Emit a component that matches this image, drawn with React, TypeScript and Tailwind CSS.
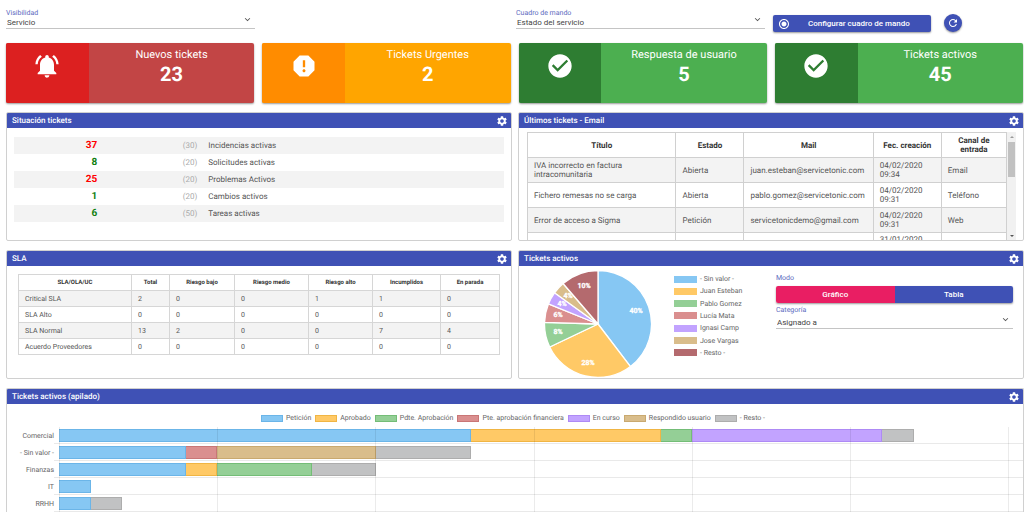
import React from 'react';
import {
  MdCheckCircle,
  MdExpandMore,
  MdNotificationsActive,
  MdRadioButtonChecked,
  MdRefresh,
  MdReport,
  MdSettings,
} from 'react-icons/md';
import type { IconType } from 'react-icons';

type SelectProps = { id: string; label: string; value: string; className?: string };

function SelectField({ id, label, value, className = '' }: SelectProps) {
  return (
    <div className={`flex flex-col ${className}`}>
      <label htmlFor={id} className="text-[7px] leading-2 text-[#5c6bc0]">
        {label}
      </label>
      <div className="grid items-start border-b border-[#c4c4c4]">
        <select
          id={id}
          className="col-start-1 row-start-1 h-[11px] w-full appearance-none bg-transparent px-px pt-px text-[8px] leading-[10px] text-[#444] outline-none"
        >
          <option>{value}</option>
        </select>
        <MdExpandMore size={11} className="pointer-events-none col-start-1 row-start-1 -mt-[3px] mr-[2px] justify-self-end text-[#555]" />
      </div>
    </div>
  );
}

type Card = { title: string; value: number; Icon: IconType; dark: string; light: string };

const cards: Card[] = [
  { title: 'Nuevos tickets', value: 23, Icon: MdNotificationsActive, dark: 'bg-[#dc2020]', light: 'bg-[#c24545]' },
  { title: 'Tickets Urgentes', value: 2, Icon: MdReport, dark: 'bg-[#ff8c00]', light: 'bg-[#ffa500]' },
  { title: 'Respuesta de usuario', value: 5, Icon: MdCheckCircle, dark: 'bg-[#2e7d32]', light: 'bg-[#4caf50]' },
  { title: 'Tickets activos', value: 45, Icon: MdCheckCircle, dark: 'bg-[#2e7d32]', light: 'bg-[#4caf50]' },
];

function StatCard({ title, value, Icon, dark, light }: Card) {
  return (
    <article className={`grid h-[60px] grid-cols-3 overflow-hidden rounded-xs text-white shadow-[0_1px_2px_rgba(0,0,0,0.4)] ${light}`}>
      <div className={`flex justify-center pt-[9px] ${dark}`}>
        <Icon size={28} />
      </div>
      <div className="col-span-2 flex flex-col items-center pt-[5px]">
        <h2 className="text-[11px] leading-[14px]">{title}</h2>
        <p className="text-[20px] leading-6 font-bold">{value}</p>
      </div>
    </article>
  );
}

type PanelProps = { title: string; className?: string; children: React.ReactNode };

function Panel({ title, className = '', children }: PanelProps) {
  return (
    <section className={`flex min-w-0 flex-col overflow-hidden rounded-xs border border-[#d0d0d0] ${className}`}>
      <header className="-mx-px flex h-[15px] shrink-0 items-center justify-between bg-[#3f51b5] pr-1 pl-[6px] text-white">
        <h2 className="text-[8px] leading-[10px] font-medium">{title}</h2>
        <button type="button" aria-label="Ajustes">
          <MdSettings size={12} />
        </button>
      </header>
      {children}
    </section>
  );
}

const situation = [
  { count: 37, over: true, limit: 30, name: 'Incidencias activas' },
  { count: 8, over: false, limit: 20, name: 'Solicitudes activas' },
  { count: 25, over: true, limit: 20, name: 'Problemas Activos' },
  { count: 1, over: false, limit: 20, name: 'Cambios activos' },
  { count: 6, over: false, limit: 50, name: 'Tareas activas' },
];

function SituationTable() {
  return (
    <div className="mx-[7px] mt-[9px]">
      <table className="w-full table-fixed">
        <colgroup>
          <col className="w-[17%]" />
          <col className="w-[100px]" />
          <col />
        </colgroup>
        <tbody>
          {situation.map((s) => (
            <tr key={s.name} className="h-[17px] odd:bg-[#f3f3f3]">
              <td className={`p-0 text-right text-[10px] leading-3 font-bold ${s.over ? 'text-[#ff0000]' : 'text-[#118011]'}`}>
                {s.count}
              </td>
              <td className="p-0 text-right text-[8px] leading-3 text-[#aaa]">({s.limit})</td>
              <td className="p-0 pl-[11px] text-[8px] leading-3 text-[#555]">{s.name}</td>
            </tr>
          ))}
        </tbody>
      </table>
    </div>
  );
}

const emails = [
  ['IVA incorrecto en factura intracomunitaria', 'Abierta', 'juan.esteban@servicetonic.com', '04/02/2020 09:34', 'Email'],
  ['Fichero remesas no se carga', 'Abierta', 'pablo.gomez@servicetonic.com', '04/02/2020 09:31', 'Teléfono'],
  ['Error de acceso a Sigma', 'Petición', 'servicetonicdemo@gmail.com', '04/02/2020 09:31', 'Web'],
];

function EmailTable() {
  const cell = 'border border-[#d0d0d0] py-0 pl-[6px]';
  return (
    <div className="mr-[7px] ml-2 flex min-h-0 flex-1 overflow-hidden pt-1">
      <div className="min-w-0 flex-1">
        <table className="w-full table-fixed border-collapse text-[8px] leading-[9px] text-[#555]">
          <colgroup>
            <col className="w-[31%]" />
            <col className="w-[68px]" />
            <col className="w-[27%]" />
            <col className="w-[68px]" />
            <col />
          </colgroup>
          <thead>
            <tr className="h-[25px] text-[#333]">
              {['Título', 'Estado', 'Mail', 'Fec. creación', 'Canal de entrada'].map((h) => (
                <th key={h} className="border border-[#d0d0d0] px-2 py-0 font-bold">
                  {h}
                </th>
              ))}
            </tr>
          </thead>
          <tbody>
            {emails.map((row, i) => (
              <tr key={i} className="h-[25px] odd:bg-[#f3f3f3]">
                {row.map((text, j) => (
                  <td key={j} className={`${cell} ${j === 0 ? 'pr-8' : j === 3 ? 'pr-4' : ''}`}>
                    {text}
                  </td>
                ))}
              </tr>
            ))}
            <tr className="h-[25px] align-top">
              <td className={cell} />
              <td className={cell} />
              <td className={cell} />
              <td className="border border-[#d0d0d0] pt-[2px] pb-0 pl-[6px]">31/01/2020</td>
              <td className={cell} />
            </tr>
          </tbody>
        </table>
      </div>
      <div className="flex w-[9px] flex-col items-center bg-[#f1f1f1] pt-1 pb-[3px]">
        <svg viewBox="0 0 4 2" className="h-[2px] w-1 shrink-0 fill-[#999]">
          <path d="M0 2L2 0L4 2Z" />
        </svg>
        <div className="mt-1 h-[35px] w-[7px] bg-[#c1c1c1]" />
        <svg viewBox="0 0 4 2" className="mt-auto h-[2px] w-1 shrink-0 fill-[#555]">
          <path d="M0 0L2 2L4 0Z" />
        </svg>
      </div>
    </div>
  );
}

const slaHead = ['SLA/OLA/UC', 'Total', 'Riesgo bajo', 'Riesgo medio', 'Riesgo alto', 'Incumplidos', 'En parada'];
const slaRows = [
  ['Critical SLA', 2, 0, 0, 1, 1, 0],
  ['SLA Alto', 0, 0, 0, 0, 0, 0],
  ['SLA Normal', 13, 2, 0, 0, 7, 4],
  ['Acuerdo Proveedores', 0, 0, 0, 0, 0, 0],
];

function SlaTable() {
  return (
    <div className="mx-[11px] mt-2">
      <table className="w-full table-fixed border-collapse text-[7px] leading-2 text-[#555]">
        <colgroup>
          <col />
          <col className="w-[38px]" />
          <col className="w-[65px]" />
          <col className="w-[74px]" />
          <col className="w-[64px]" />
          <col className="w-[68px]" />
          <col className="w-[59px]" />
        </colgroup>
        <thead>
          <tr className="h-4 text-[6px] text-[#333]">
            {slaHead.map((h) => (
              <th key={h} className="border border-[#d6d6d6] p-0 font-bold">
                {h}
              </th>
            ))}
          </tr>
        </thead>
        <tbody>
          {slaRows.map((row) => (
            <tr key={row[0]} className="h-4 odd:bg-[#f3f3f3]">
              {row.map((cell, j) => (
                <td key={j} className="border border-[#d6d6d6] py-0 pr-0 pl-[6px]">
                  {cell}
                </td>
              ))}
            </tr>
          ))}
        </tbody>
      </table>
    </div>
  );
}

const slices = [
  { name: '- Sin valor -', value: 21, pct: '40%', color: '#86c7f3', swatch: 'bg-[#86c7f3]', x: 92, y: 43 },
  { name: 'Juan Esteban', value: 15, pct: '28%', color: '#ffc966', swatch: 'bg-[#ffc966]', x: 44, y: 95 },
  { name: 'Pablo Gomez', value: 4, pct: '8%', color: '#94cf96', swatch: 'bg-[#94cf96]', x: 14, y: 64 },
  { name: 'Lucía Mata', value: 3, pct: '6%', color: '#da8f8f', swatch: 'bg-[#da8f8f]', x: 14, y: 47 },
  { name: 'Ignasi Camp', value: 2, pct: '4%', color: '#c2a3ff', swatch: 'bg-[#c2a3ff]', x: 18, y: 36 },
  { name: 'Jose Vargas', value: 2, pct: '4%', color: '#d9bd8b', swatch: 'bg-[#d9bd8b]', x: 24, y: 28 },
  { name: '- Resto -', value: 6, pct: '10%', color: '#b46a6e', swatch: 'bg-[#b46a6e]', x: 40, y: 18 },
];

function slicePath(start: number, end: number) {
  const c = 54;
  const r = 53.5;
  const total = slices.reduce((sum, s) => sum + s.value, 0);
  const point = (v: number) => {
    const a = (v / total) * 2 * Math.PI;
    return `${c + r * Math.sin(a)} ${c - r * Math.cos(a)}`;
  };
  const large = end - start > total / 2 ? 1 : 0;
  return `M${c} ${c}L${point(start)}A${r} ${r} 0 ${large} 1 ${point(end)}Z`;
}

function Pie() {
  let acc = 0;
  return (
    <svg viewBox="0 0 108 108" className="size-[108px] shrink-0" role="img" aria-label="Tickets activos">
      {slices.map((s) => {
        const d = slicePath(acc, acc + s.value);
        acc += s.value;
        return <path key={s.name} d={d} fill={s.color} stroke="#fff" strokeWidth="1.3" strokeLinejoin="round" />;
      })}
      {slices.map((s) => (
        <text
          key={s.name}
          x={s.x}
          y={s.y}
          textAnchor="middle"
          stroke="#fff"
          strokeWidth="0.3"
          className="fill-white text-[7px] font-bold"
        >
          {s.pct}
        </text>
      ))}
    </svg>
  );
}

function ActiveTickets() {
  return (
    <div className="flex min-h-0 flex-1 pt-1 pr-[10px] pl-[25px]">
      <Pie />
      <ul className="mt-[3px] ml-[22px] grid h-[86px] w-[102px] shrink-0 auto-rows-fr items-center text-[7px] leading-2 text-[#666]">
        {slices.map((s) => (
          <li key={s.name} className="flex items-center gap-[3px]">
            <span className={`h-[7px] w-[23px] ${s.swatch}`} />
            {s.name}
          </li>
        ))}
      </ul>
      <div className="flex min-w-0 flex-1 flex-col pt-1">
        <p id="modo" className="text-[7px] leading-2 text-[#5c6bc0]">
          Modo
        </p>
        <div
          role="group"
          aria-labelledby="modo"
          className="mt-1 mb-[3px] grid h-[17px] shrink-0 grid-cols-2 overflow-hidden rounded-xs text-[8px] font-medium text-white shadow-[0_1px_2px_rgba(0,0,0,0.4)]"
        >
          <button type="button" aria-pressed="true" className="bg-[#e91e63]">
            Gráfico
          </button>
          <button type="button" aria-pressed="false" className="bg-[#3f51b5]">
            Tabla
          </button>
        </div>
        <SelectField id="categoria" label="Categoría" value="Asignado a" className="gap-[3px]" />
      </div>
    </div>
  );
}

const tones = {
  peticion: { name: 'Petición', style: 'bg-[#86c7f3] border-[#6bb5e8]' },
  aprobado: { name: 'Aprobado', style: 'bg-[#ffc966] border-[#f0b544]' },
  pdte: { name: 'Pdte. Aprobación', style: 'bg-[#94cf96] border-[#74bd77]' },
  pte: { name: 'Pte. aprobación financiera', style: 'bg-[#da8f8f] border-[#c97676]' },
  curso: { name: 'En curso', style: 'bg-[#c2a3ff] border-[#ae8af5]' },
  respondido: { name: 'Respondido usuario', style: 'bg-[#d9bd8b] border-[#c9a96f]' },
  resto: { name: '- Resto -', style: 'bg-[#c1c2c3] border-[#adadad]' },
};

type Tone = keyof typeof tones;

const axisMax = 30;
const bars: { name: string; parts: [Tone, number][] }[] = [
  { name: 'Comercial', parts: [['peticion', 13], ['aprobado', 6], ['pdte', 1], ['curso', 6], ['resto', 1]] },
  { name: '- Sin valor -', parts: [['peticion', 4], ['pte', 1], ['respondido', 5], ['resto', 3]] },
  { name: 'Finanzas', parts: [['peticion', 4], ['aprobado', 1], ['pdte', 3], ['resto', 2]] },
  { name: 'IT', parts: [['peticion', 1]] },
  { name: 'RRHH', parts: [['peticion', 1], ['resto', 1]] },
];

function StackedChart() {
  return (
    <div className="flex min-h-0 flex-1 flex-col pt-[10px] text-[7px] leading-2 text-[#666]">
      <ul className="flex justify-center gap-1 pr-1">
        {Object.values(tones).map((t) => (
          <li key={t.name} className="flex items-center gap-[3px]">
            <span className={`h-[7px] w-[22px] border ${t.style}`} />
            {t.name}
          </li>
        ))}
      </ul>
      <div className="relative mt-[5px] min-h-0 flex-1">
        {bars.map((b) => (
          <div key={b.name} className="flex h-[17px] items-stretch">
            <span className="flex w-[47px] shrink-0 items-center justify-end">{b.name}</span>
            <div className="flex flex-1 items-center border-b border-[#e9e9e9] pt-px pr-[14px] pl-[5px]">
              <div className="flex flex-1">
                {b.parts.map(([tone, n]) => (
                  <span
                    key={tone}
                    className={`h-[13px] border-y border-r ${tones[tone].style}`}
                    style={{ width: `${(n / axisMax) * 100}%` }}
                  />
                ))}
              </div>
            </div>
          </div>
        ))}
        <div className="pointer-events-none absolute inset-y-0 right-[14px] left-[52px] grid grid-cols-6 border-l border-black/8">
          {[5, 10, 15, 20, 25, 30].map((v) => (
            <span key={v} className="border-r border-black/8" />
          ))}
        </div>
      </div>
    </div>
  );
}

export default function App() {
  return (
    <main className="flex h-screen flex-col gap-[9px] overflow-hidden bg-white pl-[6px] font-[Roboto,'Liberation_Sans',sans-serif] [text-rendering:geometricPrecision]">
      <div className="-mb-[9px] grid h-[43px] shrink-0 grid-cols-2 pt-[9px]">
        <SelectField id="visibilidad" label="Visibilidad" value="Servicio" className="w-[49%]" />
        <div className="flex items-start pl-px">
          <SelectField id="cuadro" label="Cuadro de mando" value="Estado del servicio" className="w-[49%]" />
          <button
            type="button"
            className="mt-[6px] ml-2 grid h-[17px] w-[158px] grid-cols-[22px_1fr] items-center rounded-xs bg-[#3f51b5] text-white shadow-[0_1px_2px_rgba(0,0,0,0.4)]"
          >
            <MdRadioButtonChecked size={12} className="justify-self-center" />
            <span className="pr-[8px] text-[8px] leading-[10px] font-medium">Configurar cuadro de mando</span>
          </button>
          <button
            type="button"
            aria-label="Actualizar"
            className="mt-[5px] ml-[13px] flex size-[18px] items-center justify-center rounded-full bg-[#3f51b5] text-white shadow-[0_1px_2px_rgba(0,0,0,0.4)]"
          >
            <MdRefresh size={12} />
          </button>
        </div>
      </div>

      <div className="grid shrink-0 grid-cols-4 gap-2 pr-px">
        {cards.map((c) => (
          <StatCard key={c.title} {...c} />
        ))}
      </div>

      <div className="grid shrink-0 auto-rows-[129px] grid-cols-2 gap-x-[6px] gap-y-[9px]">
        <Panel title="Situación tickets">
          <SituationTable />
        </Panel>
        <Panel title="Últimos tickets - Email">
          <EmailTable />
        </Panel>
        <Panel title="SLA">
          <SlaTable />
        </Panel>
        <Panel title="Tickets activos">
          <ActiveTickets />
        </Panel>
      </div>

      <Panel title="Tickets activos (apilado)" className="min-h-0 flex-1 rounded-b-none border-b-0">
        <StackedChart />
      </Panel>
    </main>
  );
}
